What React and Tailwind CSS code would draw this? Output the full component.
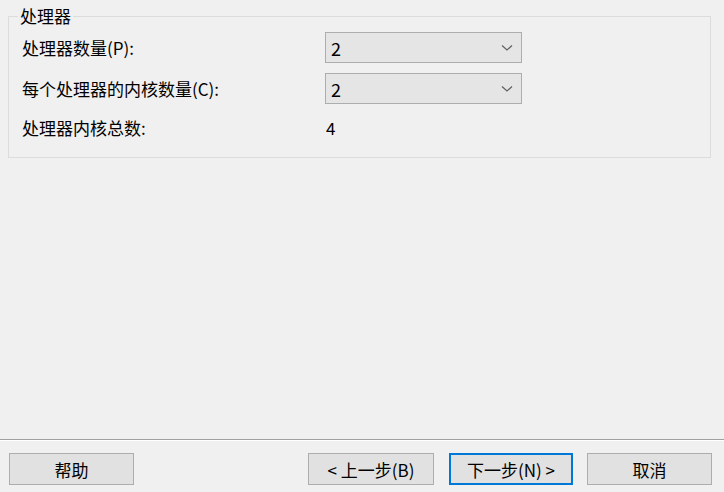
import React from "react";

const font = { fontFamily: '"Noto Sans CJK SC", "Noto Sans", sans-serif' };

const Chevron = () => (
  <svg width="12" height="8" viewBox="0 0 12 8" fill="none">
    <polyline points="1,1.5 6,6 11,1.5" stroke="#606060" strokeWidth="1.2" />
  </svg>
);

const Combo = ({ value }) => (
  <div className="flex h-[31px] w-[197px] items-center justify-between border border-[#adadad] bg-[#e5e5e5] pl-[5px] pr-[8px]">
    <span className="text-[18px] leading-none text-black">{value}</span>
    <Chevron />
  </div>
);

const Button = ({ children, primary, className = "" }) => (
  <button
    className={
      "flex h-[32px] items-center justify-center bg-[#e1e1e1] text-[17px] leading-none text-black " +
      (primary ? "border-2 border-[#0078d7] " : "border border-[#adadad] ") +
      className
    }
  >
    {children}
  </button>
);

export default function App() {
  return (
    <div className="flex h-[492px] w-[724px] flex-col bg-[#f0f0f0] text-[#000]" style={font}>
      <div className="flex-1 pt-[4px]">
        <fieldset className="ml-[8px] w-[703px] border border-[#dcdcdc] pb-[17px] pl-[13px]">
          <legend className="-ml-[4px] px-[2px] text-[17px] leading-[24px]">处理器</legend>
          <div className="mt-[4px] grid grid-cols-[303px_197px] items-center gap-y-[10px] text-[17px]">
            <span className="leading-[24px]">处理器数量(P):</span>
            <Combo value="2" />
            <span className="leading-[24px]">每个处理器的内核数量(C):</span>
            <Combo value="2" />
            <span className="mt-[2px] leading-[24px]">处理器内核总数:</span>
            <span className="mt-[2px] pl-[1px] text-[17px] leading-[24px]">4</span>
          </div>
        </fieldset>
      </div>
      <div className="border-t border-[#a0a0a0] shadow-[inset_0_1px_0_#ffffff]">
        <div className="flex items-center pb-[7px] pl-[9px] pr-[12px] pt-[13px]">
          <Button className="w-[125px]">帮助</Button>
          <div className="ml-auto flex items-center">
            <Button className="w-[126px]">&lt; 上一步(B)</Button>
            <Button primary className="ml-[15px] w-[124px]">下一步(N) &gt;</Button>
            <Button className="ml-[14px] w-[125px]">取消</Button>
          </div>
        </div>
      </div>
    </div>
  );
}
